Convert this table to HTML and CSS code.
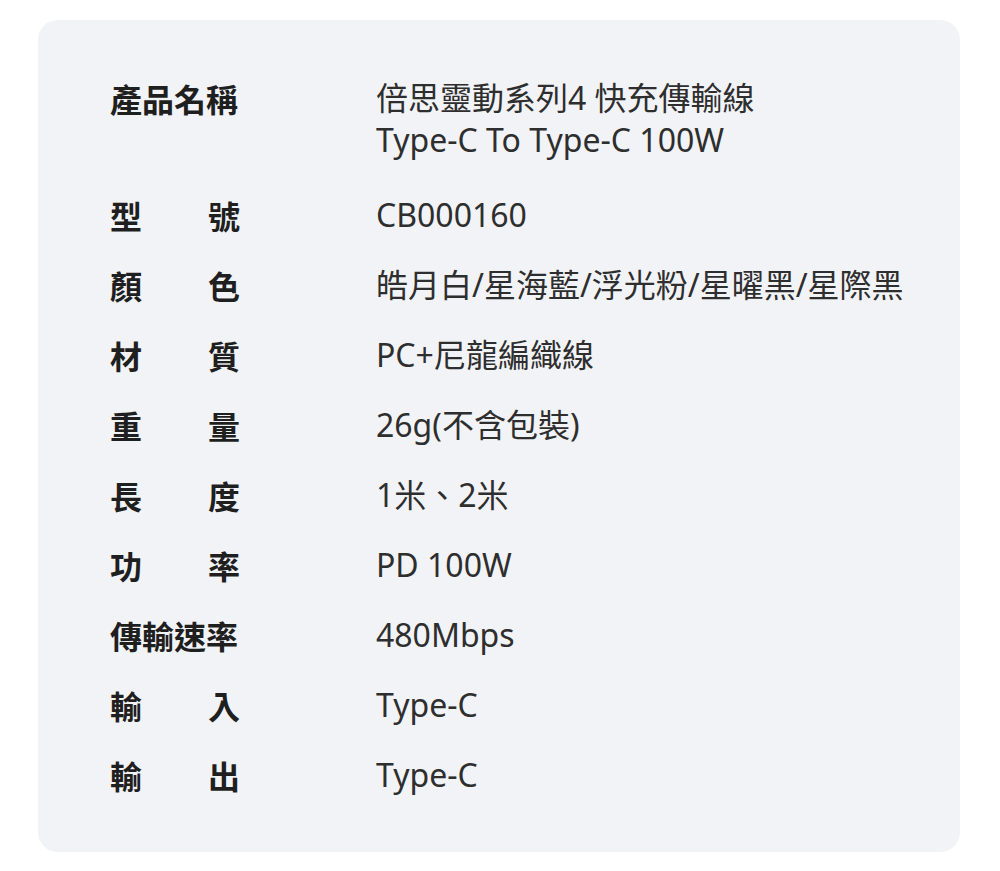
FILE: index.html
```html
<!DOCTYPE html>
<html lang="zh-Hant">
<head>
<meta charset="utf-8">
<link rel="stylesheet" href="styles.css">
</head>
<body>
<div class="card">
  <dl class="specs">
    <dt class="label row-first"><span>產品名稱</span></dt>
    <dd class="value row-first">倍思靈動系列4 快充傳輸線<br>Type-C To Type-C 100W</dd>

    <dt class="label split"><span>型</span><span>號</span></dt>
    <dd class="value">CB000160</dd>

    <dt class="label split"><span>顏</span><span>色</span></dt>
    <dd class="value">皓月白/星海藍/浮光粉/星曜黑/星際黑</dd>

    <dt class="label split"><span>材</span><span>質</span></dt>
    <dd class="value">PC+尼龍編織線</dd>

    <dt class="label split"><span>重</span><span>量</span></dt>
    <dd class="value">26g(不含包裝)</dd>

    <dt class="label split"><span>長</span><span>度</span></dt>
    <dd class="value">1米、2米</dd>

    <dt class="label split"><span>功</span><span>率</span></dt>
    <dd class="value">PD 100W</dd>

    <dt class="label"><span>傳輸速率</span></dt>
    <dd class="value">480Mbps</dd>

    <dt class="label split"><span>輸</span><span>入</span></dt>
    <dd class="value">Type-C</dd>

    <dt class="label split"><span>輸</span><span>出</span></dt>
    <dd class="value">Type-C</dd>
  </dl>
</div>
</body>
</html>
```

FILE: styles.css
```css
html, body {
  margin: 0;
  padding: 0;
  background: #ffffff;
}
body {
  padding-top: 20px;
  font-family: "Noto Sans", "Noto Sans CJK TC", sans-serif;
}
.card {
  margin-left: 38px;
  width: 922px;
  height: 832px;
  box-sizing: border-box;
  background: #f2f3f7;
  border-radius: 20px;
  padding: 57px 0 0 72px;
}
.specs {
  margin: 0;
  display: grid;
  grid-template-columns: 130px 1fr;
  column-gap: 136px;
  row-gap: 28px;
}
.label {
  margin: 0;
  font-family: "Noto Sans CJK TC", sans-serif;
  font-weight: 700;
  font-size: 32px;
  line-height: 42px;
  color: #1f1f1f;
  display: flex;
}
.label.split {
  justify-content: space-between;
}
.value {
  margin: 0;
  font-size: 32px;
  line-height: 42px;
  color: #2e2e2e;
}
.row-first {
  margin-bottom: 5px;
}
```
